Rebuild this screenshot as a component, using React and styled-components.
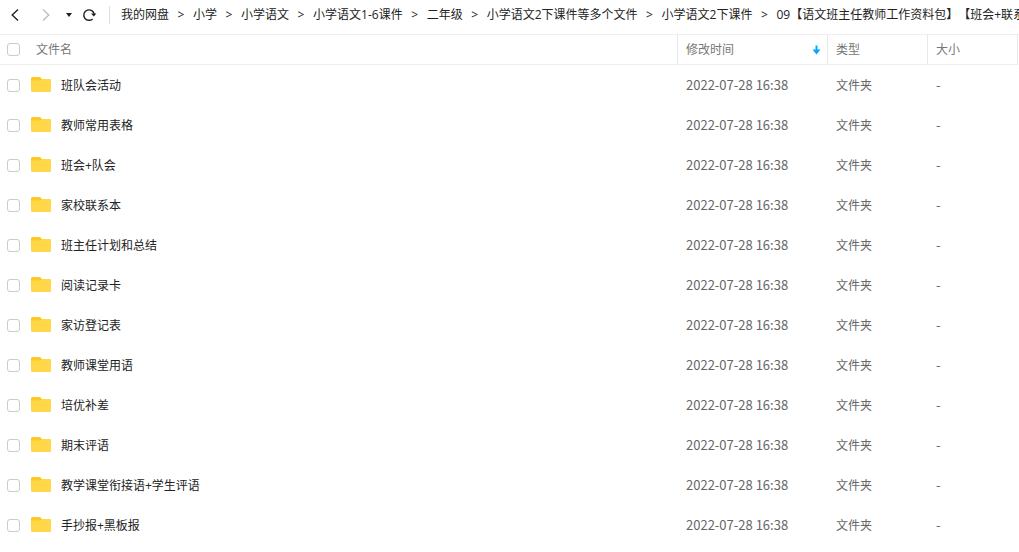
import React from 'react';
import styled, { createGlobalStyle } from 'styled-components';

const GlobalStyle = createGlobalStyle`
  * {
    box-sizing: border-box;
  }
  body {
    margin: 0;
    background: #fff;
    color: #333;
    font-family: 'Open Sans', 'Noto Sans CJK SC', sans-serif;
    font-size: 12px;
    line-height: 18px;
    text-spacing-trim: space-all;
    overflow: hidden;
  }
`;

const Toolbar = styled.header`
  display: flex;
  align-items: center;
  height: 35px;
  padding: 0 0 5px 7px;
  border-bottom: 1px solid #efefef;
  overflow: hidden;
`;

const IconButton = styled.button`
  display: flex;
  flex: none;
  align-items: center;
  justify-content: center;
  width: ${({ $width }) => $width}px;
  height: 20px;
  margin-right: ${({ $gap }) => $gap}px;
  padding: 0;
  border: 0;
  background: none;
  color: ${({ disabled }) => (disabled ? '#bbb' : '#222')};
`;

const Breadcrumb = styled.nav`
  display: flex;
  min-width: 0;
  margin-left: 12px;
  padding-left: 11px;
  border-left: 1px solid #dedede;
  white-space: nowrap;
`;

const Crumb = styled.a`
  flex: none;
  color: #222;
  text-decoration: none;
`;

const Separator = styled.span`
  flex: none;
  width: 24px;
  text-align: center;
  color: #222;
`;

const FileTable = styled.table`
  width: calc(100% - 1px);
  table-layout: fixed;
  border-collapse: separate;
  border-spacing: 0;
`;

const HeadCell = styled.th`
  width: ${({ $width }) => ($width ? `${$width}px` : 'auto')};
  height: 30px;
  padding: 0 6px 0 8px;
  border-bottom: 1px solid #efefef;
  border-left: ${({ $width }) => ($width ? '1px solid #e8e8e8' : '0')};
  color: #777;
  font-weight: normal;
  text-align: left;

  &:first-child {
    padding-left: 7px;
  }
  &:last-child {
    border-right: 1px solid #e8e8e8;
  }
`;

const HeadContent = styled.div`
  display: flex;
  align-items: center;
  justify-content: space-between;
`;

const Cell = styled.td`
  height: 40px;
  padding: ${({ $numeric }) => ($numeric ? 0 : 2)}px 0 0 9px;
  color: #666;
  font-size: ${({ $numeric }) => ($numeric ? 13 : 12)}px;
  font-family: ${({ $numeric }) => ($numeric ? "'Noto Sans CJK SC', sans-serif" : 'inherit')};

  &:first-child {
    padding: 0 0 0 7px;
  }
`;

const NameBox = styled.div`
  display: flex;
  align-items: center;
  color: #222;
`;

const Checkbox = styled.input`
  appearance: none;
  flex: none;
  width: 13px;
  height: 13px;
  margin: 0;
  border: 1px solid #ccc;
  border-radius: 3px;
  background: #fff;

  &:checked {
    border-color: #06a7ff;
    background: #06a7ff;
  }
`;

const NameLabel = styled.label`
  margin-left: ${({ $head }) => ($head ? 16 : 10)}px;
  padding-top: ${({ $head }) => ($head ? 0 : 2)}px;
  color: ${({ $head }) => ($head ? '#777' : '#222')};
`;

const FolderSvg = styled.svg`
  flex: none;
  margin: 0 0 1px 11px;
`;

const crumbs = [
  '我的网盘',
  '小学',
  '小学语文',
  '小学语文1-6课件',
  '二年级',
  '小学语文2下课件等多个文件',
  '小学语文2下课件',
  '09【语文班主任教师工作资料包】【班会+联系本】',
];

const folders = [
  '班队会活动',
  '教师常用表格',
  '班会+队会',
  '家校联系本',
  '班主任计划和总结',
  '阅读记录卡',
  '家访登记表',
  '教师课堂用语',
  '培优补差',
  '期末评语',
  '教学课堂衔接语+学生评语',
  '手抄报+黑板报',
];

function FolderIcon() {
  return (
    <FolderSvg width="20" height="15" viewBox="0 0 20 15" aria-hidden="true">
      <path d="M0 1.5Q0 0 1.5 0H8.2Q9 0 9.6 .6L11 2H18Q20 2 20 3.5V8H0Z" fill="#ffc721" />
      <path d="M0 5Q0 3.6 1.5 3.6H8.3Q9.3 3.6 10 2.8Q10.7 2 11.7 2H18.5Q20 2 20 3.5V13.5Q20 15 18.5 15H1.5Q0 15 0 13.5Z" fill="#ffd748" />
    </FolderSvg>
  );
}

function NavBar() {
  return (
    <Toolbar>
      <IconButton type="button" aria-label="后退" $width={16} $gap={15}>
        <svg width="16" height="16" viewBox="0 0 16 16" fill="none" stroke="currentColor" strokeWidth="1.4">
          <path d="M11 2.5L5.2 8L11 13.5" />
        </svg>
      </IconButton>
      <IconButton type="button" aria-label="前进" disabled $width={16} $gap={9}>
        <svg width="16" height="16" viewBox="0 0 16 16" fill="none" stroke="currentColor" strokeWidth="1.3">
          <path d="M5 2.5L10.8 8L5 13.5" />
        </svg>
      </IconButton>
      <IconButton type="button" aria-label="历史" $width={12} $gap={7}>
        <svg width="8" height="6" viewBox="0 0 8 6">
          <path d="M1 1H7L4 5Z" fill="currentColor" />
        </svg>
      </IconButton>
      <IconButton type="button" aria-label="刷新" $width={15} $gap={0}>
        <svg width="15" height="14" viewBox="0 0 15 14" fill="none" stroke="currentColor" strokeWidth="1.4">
          <path d="M10.6 10.9A5.2 5.2 0 1 1 12.2 6.5" />
          <path d="M9 5.5H14.4L11.8 8.6Z" fill="currentColor" stroke="none" />
        </svg>
      </IconButton>
      <Breadcrumb aria-label="路径">
        {crumbs.map((crumb, i) => (
          <React.Fragment key={crumb}>
            {i > 0 && <Separator>&gt;</Separator>}
            <Crumb href="#">{crumb}</Crumb>
          </React.Fragment>
        ))}
      </Breadcrumb>
    </Toolbar>
  );
}

function FileRow({ name, id }) {
  return (
    <tr>
      <Cell>
        <NameBox>
          <Checkbox type="checkbox" id={id} />
          <FolderIcon />
          <NameLabel htmlFor={id}>{name}</NameLabel>
        </NameBox>
      </Cell>
      <Cell $numeric>2022-07-28 16:38</Cell>
      <Cell>文件夹</Cell>
      <Cell $numeric>-</Cell>
    </tr>
  );
}

function App() {
  return (
    <>
      <GlobalStyle />
      <NavBar />
      <main>
        <FileTable>
          <thead>
            <tr>
              <HeadCell>
                <NameBox>
                  <Checkbox type="checkbox" id="all" />
                  <NameLabel htmlFor="all" $head>文件名</NameLabel>
                </NameBox>
              </HeadCell>
              <HeadCell $width={150} aria-sort="descending">
                <HeadContent>
                  修改时间
                  <svg width="9" height="10" viewBox="0 0 9 10" aria-hidden="true">
                    <path d="M3.5 .5H5.5V4.5H8.5L4.5 9.5L.5 4.5H3.5Z" fill="#06a7ff" />
                  </svg>
                </HeadContent>
              </HeadCell>
              <HeadCell $width={100}>类型</HeadCell>
              <HeadCell $width={91}>大小</HeadCell>
            </tr>
          </thead>
          <tbody>
            {folders.map((name, i) => (
              <FileRow key={name} name={name} id={`folder-${i}`} />
            ))}
          </tbody>
        </FileTable>
      </main>
    </>
  );
}

export default App;
